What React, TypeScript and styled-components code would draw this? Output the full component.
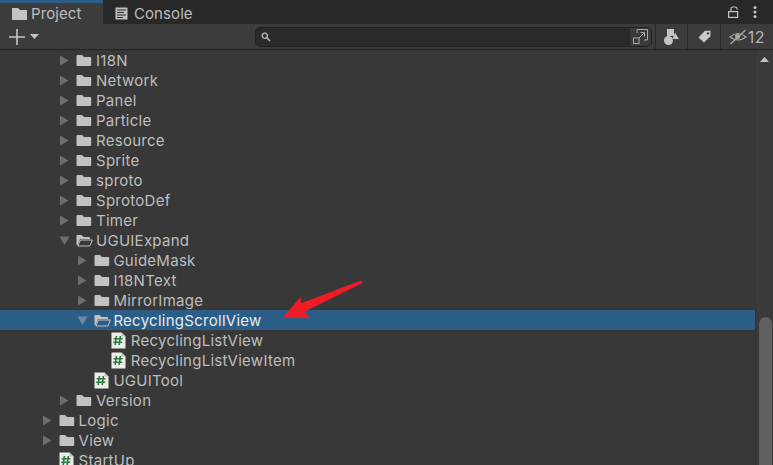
import React from "react";
import styled, { createGlobalStyle } from "styled-components";

const GlobalStyle = createGlobalStyle`
  html, body {
    margin: 0;
    padding: 0;
    background: #383838;
  }
`;

const Window = styled.div`
  position: relative;
  width: 773px;
  height: 465px;
  overflow: hidden;
  display: flex;
  flex-direction: column;
  font-family: Inter, "Liberation Sans", sans-serif;
  font-size: 15px;
  letter-spacing: 0.27px;
  color: #bebebe;
`;

const TabBar = styled.div`
  height: 24px;
  flex: none;
  display: flex;
  align-items: stretch;
  background: #282828;
`;

const Tab = styled.div<{ $active?: boolean; $width: number; $gap: number }>`
  width: ${(p) => p.$width}px;
  box-sizing: border-box;
  display: flex;
  align-items: center;
  gap: ${(p) => p.$gap}px;
  padding-left: 12px;
  background: ${(p) => (p.$active ? "#3c3c3c" : "transparent")};
  border-top: 3px solid ${(p) => (p.$active ? "#2c5d87" : "transparent")};
  color: #bcbcbc;
  letter-spacing: 0.08px;
`;

const TabActions = styled.div`
  margin-left: auto;
  display: flex;
  align-items: center;
  gap: 14px;
  padding: 0 16px 0 0;
`;

const Toolbar = styled.div`
  height: 25px;
  flex: none;
  display: flex;
  align-items: center;
  background: #3c3c3c;
  border-bottom: 1px solid #232323;
`;

const CreateButton = styled.div`
  width: 255px;
  flex: none;
  display: flex;
  align-items: center;
  gap: 5px;
  padding-left: 9px;
  box-sizing: border-box;
`;

const SearchField = styled.div`
  width: 397px;
  height: 20px;
  flex: none;
  box-sizing: border-box;
  display: flex;
  align-items: center;
  justify-content: space-between;
  padding-left: 5px;
  margin-right: 3px;
  background: #2a2a2a;
  border: 1px solid #212121;
  border-radius: 5px;
  overflow: hidden;
`;

const SearchMode = styled.div`
  width: 21px;
  height: 18px;
  display: flex;
  align-items: center;
  justify-content: center;
  background: #3a3a3a;
`;

const ToolButton = styled.div<{ $width: number }>`
  width: ${(p) => p.$width}px;
  height: 25px;
  flex: none;
  box-sizing: border-box;
  display: flex;
  align-items: center;
  justify-content: center;
  gap: 1px;
  border-left: 1px solid #282828;
  font-size: 16px;
  letter-spacing: 0.6px;
  color: #b4b4b4;
`;

const Body = styled.div`
  flex: 1;
  min-height: 0;
  display: flex;
  background: #383838;
`;

const Tree = styled.div`
  flex: 1;
  min-width: 0;
  overflow: hidden;
`;

const Row = styled.div<{ $depth: number; $selected?: boolean }>`
  height: 20px;
  display: flex;
  align-items: center;
  padding-left: ${(p) => 42 + p.$depth * 17.4}px;
  background: ${(p) => (p.$selected ? "#2c5d87" : "transparent")};
  color: ${(p) => (p.$selected ? "#e4eaef" : "#bebebe")};
  white-space: nowrap;
`;

const Toggle = styled.div`
  width: 17px;
  flex: none;
  display: flex;
  align-items: center;
`;

const Glyph = styled.div`
  width: 19.6px;
  flex: none;
  display: flex;
  align-items: center;
`;

const ScrollTrack = styled.div`
  position: relative;
  width: 18px;
  flex: none;
  background: #3a3a3a;
  border-left: 1px solid #333333;
  box-sizing: border-box;
  display: flex;
  flex-direction: column;
  align-items: center;
  padding-top: 7px;
`;

const ScrollThumb = styled.div`
  position: absolute;
  left: 3px;
  top: 267px;
  bottom: -20px;
  width: 13px;
  border-radius: 7px 7px 0 0;
  background: #5f5f5f;
`;

const Callout = styled.svg`
  position: absolute;
  left: 280px;
  top: 278px;
  pointer-events: none;
`;

const FolderIcon = () => (
  <svg width="16" height="14" viewBox="0 0 16 14">
    <path d="M0.5 3.2 Q0.5 2 1.7 2 H6 L8 4 H14.2 Q15.2 4 15.2 5 V12 Q15.2 13 14.2 13 H1.7 Q0.5 13 0.5 12 Z" fill="#c2c2c2" />
  </svg>
);

const OpenFolderIcon = () => (
  <svg width="17" height="14" viewBox="0 0 17 14">
    <path d="M0.5 3 Q0.5 2 1.5 2 H5.5 L7.5 4 H13 Q14 4 14 5 V6 H4 L1.6 12 H0.5 Z" fill="#c2c2c2" />
    <path d="M4.4 7 H16.4 L13.8 13 H1.8 Z" fill="none" stroke="#c2c2c2" strokeWidth="1" />
  </svg>
);

const ScriptIcon = () => (
  <svg width="15" height="17" viewBox="0 0 15 17">
    <path d="M0.5 0.5 H10.5 L14.5 4.5 V16.5 H0.5 Z" fill="#ececec" />
    <path d="M10.5 0.5 L14.5 4.5 H10.5 Z" fill="#bdbdbd" />
    <path d="M5.4 4 L4.2 13 M9.4 4 L8.2 13 M2.6 6.8 H11.6 M2.2 10.2 H11.2" stroke="#2d7a3c" strokeWidth="1.6" fill="none" />
  </svg>
);

const Triangle = ({ open, selected }: { open?: boolean; selected?: boolean }) => (
  <svg width="11" height="11" viewBox="0 0 11 11">
    {open ? (
      <path d="M0.5 1.5 H10.5 L5.5 10 Z" fill={selected ? "#6f8aa0" : "#6e6e6e"} />
    ) : (
      <path d="M1 0.5 L9.5 5.5 L1 10.5 Z" fill="#6e6e6e" />
    )}
  </svg>
);

type Item = {
  name: string;
  depth: number;
  kind?: "folder" | "open" | "script";
  expanded?: boolean;
  selected?: boolean;
};

const items: Item[] = [
  { name: "I18N", depth: 1 },
  { name: "Network", depth: 1 },
  { name: "Panel", depth: 1 },
  { name: "Particle", depth: 1 },
  { name: "Resource", depth: 1 },
  { name: "Sprite", depth: 1 },
  { name: "sproto", depth: 1 },
  { name: "SprotoDef", depth: 1 },
  { name: "Timer", depth: 1 },
  { name: "UGUIExpand", depth: 1, kind: "open", expanded: true },
  { name: "GuideMask", depth: 2 },
  { name: "I18NText", depth: 2 },
  { name: "MirrorImage", depth: 2 },
  { name: "RecyclingScrollView", depth: 2, kind: "open", expanded: true, selected: true },
  { name: "RecyclingListView", depth: 3, kind: "script" },
  { name: "RecyclingListViewItem", depth: 3, kind: "script" },
  { name: "UGUITool", depth: 2, kind: "script" },
  { name: "Version", depth: 1 },
  { name: "Logic", depth: 0 },
  { name: "View", depth: 0 },
  { name: "StartUp", depth: 0, kind: "script" },
];

const App: React.FC = () => {
  return (
    <Window>
      <GlobalStyle />
      <TabBar>
        <Tab $active $width={103} $gap={4}>
          <svg width="15" height="13" viewBox="0 0 15 13">
            <path d="M0 1 H6 L8 3 H15 V13 H0 Z" fill="#c4c4c4" />
          </svg>
          Project
        </Tab>
        <Tab $width={100} $gap={6}>
          <svg width="13" height="13" viewBox="0 0 13 13">
            <rect x="0.5" y="0.5" width="12" height="12" fill="#c0c0c0" />
            <path d="M2 3 H11 M2 5.5 H9 M2 8 H11 M2 10.5 H8" stroke="#282828" strokeWidth="1" />
          </svg>
          Console
        </Tab>
        <TabActions>
          <svg width="11" height="12" viewBox="0 0 11 12">
            <path d="M3 5 V2.5 Q3 1 5 1 H7 Q9 1 9 2.5 V3.5" fill="none" stroke="#c4c4c4" strokeWidth="1.2" />
            <rect x="0.6" y="5.6" width="9" height="5.8" fill="none" stroke="#c4c4c4" strokeWidth="1.2" />
          </svg>
          <svg width="4" height="12" viewBox="0 0 4 12">
            <circle cx="2" cy="1.5" r="1.5" fill="#c4c4c4" />
            <circle cx="2" cy="6" r="1.5" fill="#c4c4c4" />
            <circle cx="2" cy="10.5" r="1.5" fill="#c4c4c4" />
          </svg>
        </TabActions>
      </TabBar>
      <Toolbar>
        <CreateButton>
          <svg width="16" height="16" viewBox="0 0 16 16">
            <path d="M8 0 V16 M0 8 H16" stroke="#c8c8c8" strokeWidth="1.6" />
          </svg>
          <svg width="9" height="5" viewBox="0 0 9 5">
            <path d="M0 0 H9 L4.5 5 Z" fill="#c4c4c4" />
          </svg>
        </CreateButton>
        <SearchField>
          <svg width="10" height="10" viewBox="0 0 10 10">
            <circle cx="3.8" cy="3.8" r="2.6" fill="none" stroke="#c0c0c0" strokeWidth="1.3" />
            <path d="M5.8 5.8 L9 9" stroke="#c0c0c0" strokeWidth="1.5" />
          </svg>
          <SearchMode>
            <svg width="15" height="15" viewBox="0 0 15 15">
              <path d="M4 4 V0.5 H14.5 V11 H11" fill="none" stroke="#a8a8a8" strokeWidth="1" />
              <rect x="0.5" y="9" width="5.5" height="5.5" fill="none" stroke="#a8a8a8" strokeWidth="1" />
              <path d="M6 9 L11 4 M7.5 3.5 H11.5 V7.5" fill="none" stroke="#a8a8a8" strokeWidth="1" />
            </svg>
          </SearchMode>
        </SearchField>
        <ToolButton $width={32}>
          <svg width="15" height="16" viewBox="0 0 15 16">
            <rect x="3" y="0" width="7" height="7" fill="#c4c4c4" />
            <circle cx="4.5" cy="11.5" r="4.5" fill="#c4c4c4" />
            <path d="M11 3.5 L15 10 H8.5 Z" fill="#c4c4c4" />
          </svg>
        </ToolButton>
        <ToolButton $width={33}>
          <svg width="13" height="13" viewBox="0 0 13 13">
            <path d="M0.5 7.5 L7 0.8 H12.5 V6.2 L6 12.5 Z" fill="#c8c8c8" />
            <circle cx="10" cy="3.4" r="1.1" fill="#3c3c3c" />
          </svg>
        </ToolButton>
        <ToolButton $width={53}>
          <svg width="18" height="16" viewBox="0 0 18 16">
            <path d="M1 8 Q9 1 17 8 Q9 14 1 8 Z" fill="none" stroke="#a8a8a8" strokeWidth="1.2" />
            <circle cx="8.5" cy="7.5" r="2.5" fill="#a8a8a8" />
            <path d="M1.5 15 L16.5 1" stroke="#a8a8a8" strokeWidth="1.3" />
          </svg>
          12
        </ToolButton>
      </Toolbar>
      <Body>
        <Tree>
          {items.map((item) => (
            <Row key={item.name} $depth={item.depth} $selected={item.selected}>
              <Toggle>{item.kind !== "script" && <Triangle open={item.expanded} selected={item.selected} />}</Toggle>
              <Glyph>
                {item.kind === "script" ? <ScriptIcon /> : item.kind === "open" ? <OpenFolderIcon /> : <FolderIcon />}
              </Glyph>
              {item.name}
            </Row>
          ))}
        </Tree>
        <ScrollTrack>
          <svg width="9" height="5" viewBox="0 0 9 5">
            <path d="M0 5 H9 L4.5 0 Z" fill="#c4c4c4" />
          </svg>
          <ScrollThumb />
        </ScrollTrack>
      </Body>
      <Callout width="90" height="45" viewBox="280 278 90 45">
        <path d="M282.7 317.7 L300.7 296.7 L301 303.3 L361 280.5 L362.5 283 L304.3 311.7 L310 318.3 Z" fill="#ee1c25" />
      </Callout>
    </Window>
  );
};

export default App;
